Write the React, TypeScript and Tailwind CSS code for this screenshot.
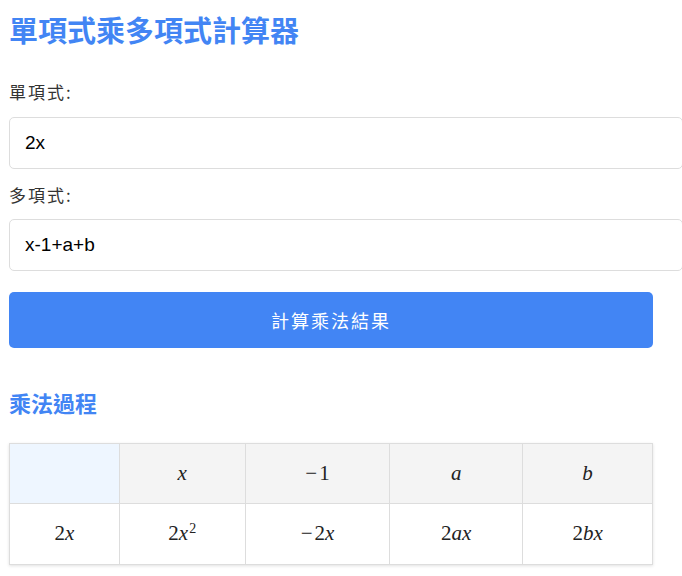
import React from 'react';

const cjk = '"Noto Sans CJK TC", "Noto Sans", sans-serif';
const math = '"Liberation Serif", "DejaVu Serif", serif';

// a term split into upright digits/signs and italic variables, like KaTeX output
function MathText({ tex, sup }: { tex: string; sup?: string }) {
  return (
    <span className="text-[21px] text-[#222]" style={{ fontFamily: math }}>
      {tex.split('').map((ch, i) =>
        /[a-z]/.test(ch) ? (
          <i key={i}>{ch}</i>
        ) : (
          <span key={i} className={ch === '−' ? 'mr-[2px]' : ''}>
            {ch}
          </span>
        )
      )}
      {sup && <sup className="text-[14px] ml-[1px]">{sup}</sup>}
    </span>
  );
}

const headers = [
  { tex: 'x', w: 'w-[126px]' },
  { tex: '−1', w: 'w-[145px]' },
  { tex: 'a', w: 'w-[133px]' },
  { tex: 'b', w: 'w-[130px]' },
];

export default function App() {
  return (
    <div className="min-h-[576px] bg-white px-[9px]" style={{ fontFamily: cjk }}>
      <div className="w-[644px]">
        <h1 className="h-[60px] flex items-center text-[29px] font-bold text-[#4285f4]">
          單項式乘多項式計算器
        </h1>

        <label className="block mt-[20px] h-[24px] leading-[24px] text-[17px] text-[#333] tracking-[2px]">
          單項式<span className="tracking-normal">:</span>
        </label>
        <input
          type="text"
          defaultValue="2x"
          className="block mt-[13px] w-[674px] h-[52px] px-[15px] border border-[#ddd] rounded-[5px] text-[19px] text-black outline-none"
          style={{ fontFamily: '"Liberation Sans", Arial, sans-serif' }}
        />

        <label className="block mt-[14px] h-[24px] leading-[24px] text-[17px] text-[#333] tracking-[2px]">
          多項式<span className="tracking-normal">:</span>
        </label>
        <input
          type="text"
          defaultValue="x-1+a+b"
          className="block mt-[12px] w-[674px] h-[52px] px-[15px] border border-[#ddd] rounded-[5px] text-[19px] text-black outline-none"
          style={{ fontFamily: '"Liberation Sans", Arial, sans-serif' }}
        />

        <button className="block mt-[21px] w-full h-[56px] rounded-[5px] bg-[#4285f4] text-white text-[18px] tracking-[2px]">
          計算乘法結果
        </button>

        <h2 className="mt-[39px] h-[30px] flex items-center text-[22px] font-bold text-[#4285f4]">
          乘法過程
        </h2>

        <table className="mt-[26px] w-full border-collapse shadow-[0_1px_3px_rgba(0,0,0,0.12)]">
          <thead>
            <tr className="h-[60px]">
              <th className="w-[110px] border border-[#ddd] bg-[#eef6ff]"></th>
              {headers.map((h) => (
                <th key={h.tex} className={`border border-[#ddd] bg-[#f4f4f4] font-normal ${h.w}`}>
                  <MathText tex={h.tex} />
                </th>
              ))}
            </tr>
          </thead>
          <tbody>
            <tr className="h-[61px] text-center">
              <td className="border border-[#ddd]">
                <MathText tex="2x" />
              </td>
              <td className="border border-[#ddd]">
                <MathText tex="2x" sup="2" />
              </td>
              <td className="border border-[#ddd]">
                <MathText tex="−2x" />
              </td>
              <td className="border border-[#ddd]">
                <MathText tex="2ax" />
              </td>
              <td className="border border-[#ddd]">
                <MathText tex="2bx" />
              </td>
            </tr>
          </tbody>
        </table>
      </div>
    </div>
  );
}
